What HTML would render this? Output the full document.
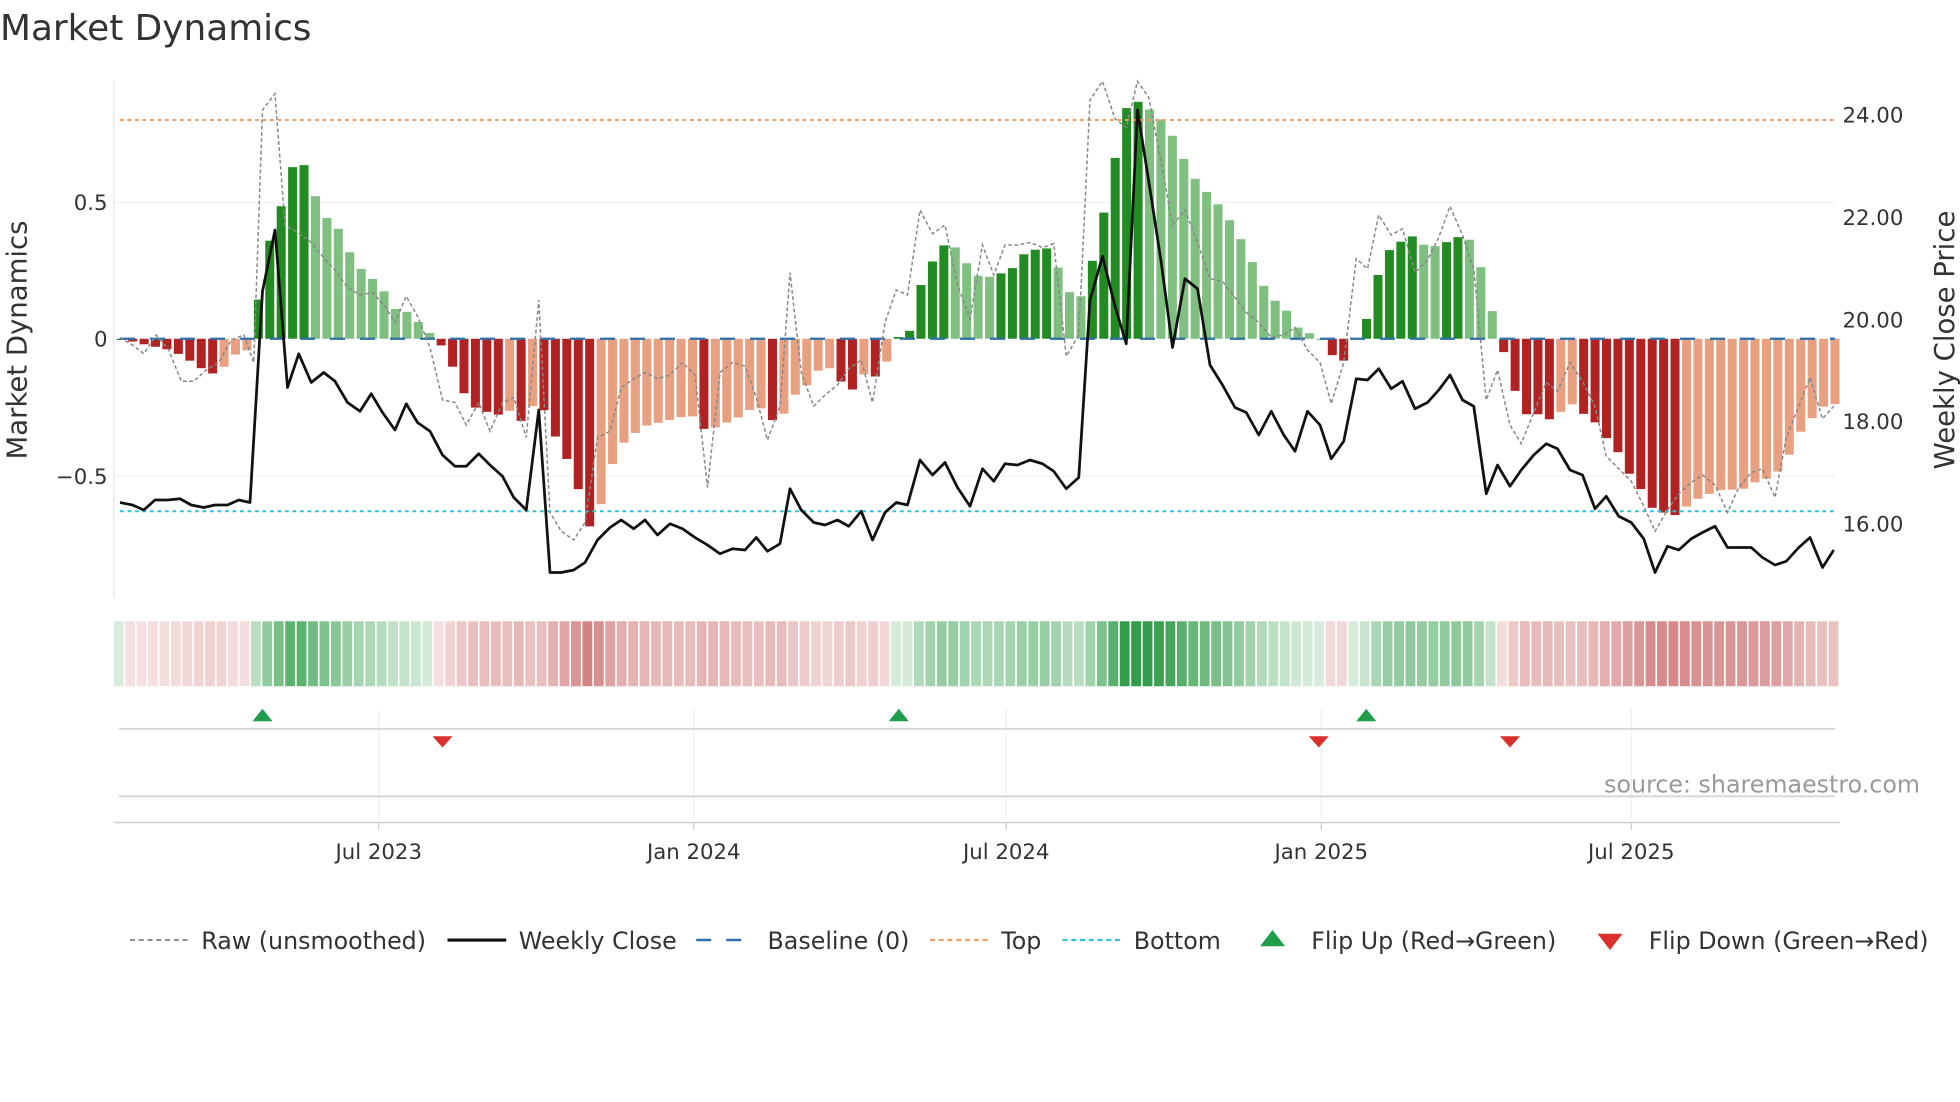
<!DOCTYPE html>
<html><head><meta charset="utf-8"><style>
html,body{margin:0;padding:0;background:#fff;width:1960px;height:1102px;overflow:hidden}
svg{display:block;font-family:"DejaVu Sans","Liberation Sans",sans-serif}
</style></head><body>
<svg id="s" width="1960" height="1102" viewBox="0 0 1568 881.6" preserveAspectRatio="none" xmlns="http://www.w3.org/2000/svg">
<rect width="1568" height="882" fill="#fff"/>
<text x="0" y="32" font-size="28.7" fill="#333">Market Dynamics</text>
<line x1="91" y1="65" x2="91" y2="478" stroke="#e6e6e6"/>
<line x1="91" y1="162" x2="1468" y2="162" stroke="#eef0f4"/>
<line x1="91" y1="381" x2="1468" y2="381" stroke="#eef0f4"/>
<g font-size="17" fill="#333">
<text x="86" y="168" text-anchor="end">0.5</text>
<text x="86" y="277" text-anchor="end">0</text>
<text x="86" y="387" text-anchor="end">−0.5</text>
<text x="1474" y="98">24.00</text>
<text x="1474" y="180">22.00</text>
<text x="1474" y="262">20.00</text>
<text x="1474" y="343">18.00</text>
<text x="1474" y="425">16.00</text>
</g>
<text transform="translate(21,272) rotate(-90)" text-anchor="middle" font-size="22" fill="#333">Market Dynamics</text>
<text transform="translate(1563,272) rotate(-90)" text-anchor="middle" font-size="22" fill="#333">Weekly Close Price</text>
<g id="bars"></g>
<line x1="96" y1="96" x2="1468" y2="96" stroke="#f0a060" stroke-width="1.6" stroke-dasharray="3,3"/>
<line x1="96" y1="409" x2="1468" y2="409" stroke="#2ec4d6" stroke-width="1.6" stroke-dasharray="3,3"/>
<line x1="96" y1="271" x2="1468" y2="271" stroke="#2f6fa8" stroke-width="1.8" stroke-dasharray="12,12"/>
<polyline id="raw" fill="none" stroke="#888" stroke-width="1.2" stroke-dasharray="3,2"/>
<polyline id="close" fill="none" stroke="#111" stroke-width="2.2" stroke-linejoin="round"/>
<g id="strip"></g>
<g stroke="#eceff3">
<line x1="303" y1="567" x2="303" y2="655"/><line x1="555" y1="567" x2="555" y2="655"/><line x1="805" y1="567" x2="805" y2="655"/><line x1="1057" y1="567" x2="1057" y2="655"/><line x1="1305" y1="567" x2="1305" y2="655"/>
</g>
<line x1="95" y1="583" x2="1468" y2="583" stroke="#d6d6d6" stroke-width="1.5"/>
<line x1="95" y1="637" x2="1468" y2="637" stroke="#d6d6d6" stroke-width="1.5"/>
<line x1="91" y1="658" x2="1472" y2="658" stroke="#d0d0d0" stroke-width="1.2"/>
<g fill="#1e9e4a"><path d="M202,577 L210,567 L218,577Z"/><path d="M711,577 L719,567 L727,577Z"/><path d="M1085,577 L1093,567 L1101,577Z"/></g>
<g fill="#d9302c"><path d="M346,589 L362,589 L354,598Z"/><path d="M1047,589 L1063,589 L1055,598Z"/><path d="M1200,589 L1216,589 L1208,598Z"/></g>
<text x="1536" y="634" text-anchor="end" font-size="19" fill="#999">source: sharemaestro.com</text>
<g stroke="#ccc"><line x1="303" y1="658" x2="303" y2="664"/><line x1="555" y1="658" x2="555" y2="664"/><line x1="805" y1="658" x2="805" y2="664"/><line x1="1057" y1="658" x2="1057" y2="664"/><line x1="1305" y1="658" x2="1305" y2="664"/></g>
<g font-size="17" fill="#333" text-anchor="middle">
<text x="303" y="687">Jul 2023</text><text x="555" y="687">Jan 2024</text><text x="805" y="687">Jul 2024</text><text x="1057" y="687">Jan 2025</text><text x="1305" y="687">Jul 2025</text>
</g>
<g font-size="19" fill="#333">
<line x1="104" y1="752" x2="150" y2="752" stroke="#888" stroke-width="1.5" stroke-dasharray="4,3"/>
<text x="161" y="759">Raw (unsmoothed)</text>
<line x1="358" y1="752" x2="405" y2="752" stroke="#111" stroke-width="2.5"/>
<text x="415" y="759">Weekly Close</text>
<line x1="557" y1="752" x2="604" y2="752" stroke="#2f6fa8" stroke-width="2" stroke-dasharray="12,12"/>
<text x="614" y="759">Baseline (0)</text>
<line x1="744" y1="752" x2="790" y2="752" stroke="#f0a060" stroke-width="1.8" stroke-dasharray="4,3"/>
<text x="801" y="759">Top</text>
<line x1="850" y1="752" x2="896" y2="752" stroke="#2ec4d6" stroke-width="1.8" stroke-dasharray="4,3"/>
<text x="907" y="759">Bottom</text>
<path d="M1008,757 L1018,744 L1028,757Z" fill="#1e9e4a"/>
<text x="1049" y="759">Flip Up (Red→Green)</text>
<path d="M1278,747 L1298,747 L1288,760Z" fill="#d9302c"/>
<text x="1319" y="759">Flip Down (Green→Red)</text>
</g>
</svg>
<script>
var kp=[[97,0],[115,-0.02],[135,-0.04],[145,-0.06],[155,-0.09],[165,-0.12],[172,-0.13],[180,-0.1],[190,-0.05],[200,-0.04],[208,0.18],[218,0.41],[228,0.52],[238,0.70],[248,0.58],[258,0.45],[268,0.43],[278,0.33],[288,0.26],[298,0.22],[308,0.17],[316,0.11],[325,0.1],[335,0.06],[344,0.02],[354,-0.03],[364,-0.12],[373,-0.22],[382,-0.26],[391,-0.27],[400,-0.28],[410,-0.26],[420,-0.32],[430,-0.2],[440,-0.32],[450,-0.41],[460,-0.5],[470,-0.7],[479,-0.64],[488,-0.48],[497,-0.39],[507,-0.35],[516,-0.32],[525,-0.31],[534,-0.3],[543,-0.29],[553,-0.28],[565,-0.34],[575,-0.32],[585,-0.3],[595,-0.28],[605,-0.24],[615,-0.28],[623,-0.33],[632,-0.21],[641,-0.2],[650,-0.14],[660,-0.09],[670,-0.14],[680,-0.2],[690,-0.13],[700,-0.14],[710,-0.08],[718,0.005],[728,0.03],[738,0.22],[748,0.3],[758,0.36],[768,0.32],[778,0.24],[788,0.22],[798,0.24],[808,0.24],[815,0.31],[824,0.31],[834,0.35],[843,0.3],[852,0.2],[862,0.12],[872,0.25],[882,0.44],[892,0.66],[902,0.86],[911,0.87],[920,0.84],[930,0.8],[940,0.73],[950,0.63],[960,0.56],[970,0.52],[980,0.46],[990,0.39],[1000,0.3],[1010,0.2],[1020,0.14],[1030,0.1],[1040,0.03],[1048,0.02],[1056,0.005],[1064,-0.05],[1073,-0.1],[1082,-0.01],[1092,0.05],[1102,0.23],[1112,0.33],[1122,0.36],[1132,0.38],[1140,0.34],[1150,0.34],[1160,0.36],[1170,0.38],[1180,0.35],[1188,0.2],[1198,0.03],[1208,-0.13],[1218,-0.28],[1228,-0.27],[1238,-0.3],[1248,-0.27],[1258,-0.24],[1268,-0.28],[1277,-0.31],[1286,-0.37],[1295,-0.42],[1304,-0.5],[1314,-0.56],[1323,-0.63],[1333,-0.64],[1343,-0.65],[1352,-0.6],[1362,-0.58],[1372,-0.56],[1382,-0.55],[1392,-0.56],[1401,-0.53],[1410,-0.52],[1420,-0.5],[1429,-0.45],[1439,-0.35],[1448,-0.3],[1458,-0.25],[1468,-0.24]];
function val(x){for(var i=0;i<kp.length-1;i++){if(x<=kp[i+1][0]){var a=kp[i],b=kp[i+1];return a[1]+(b[1]-a[1])*(x-a[0])/(b[0]-a[0]);}}return kp[kp.length-1][1];}
var NS="http://www.w3.org/2000/svg",bars=document.getElementById('bars'),strip=document.getElementById('strip');
var N=151,step=(1468-97)/(N-1),prev=0;
for(var i=0;i<N;i++){var x=97+i*step,v=val(x),up=v>=prev,c;
 if(v>=0)c=up?'#228b22':'#7fbf7f';else c=up?'#e9a080':'#b22222';
 var h=Math.abs(v)*218,r=document.createElementNS(NS,'rect');
 r.setAttribute('x',x-3.6);r.setAttribute('width',7.2);r.setAttribute('y',v>=0?271-h:271);r.setAttribute('height',Math.max(h,1));r.setAttribute('fill',c);bars.appendChild(r);
 var s=document.createElementNS(NS,'rect'),a=0.18+0.75*Math.min(1,Math.abs(v)/0.85);
 s.setAttribute('x',91+i*(1381/N));s.setAttribute('width',1381/N-1.3);s.setAttribute('y',497);s.setAttribute('height',52);
 s.setAttribute('fill',v>=0?'rgba(34,150,60,'+a+')':'rgba(190,70,70,'+(a*0.85)+')');strip.appendChild(s);prev=v;}
document.getElementById('close').setAttribute('points',"96,402 106,404 115,408 124,400 134,400 144,399 153,404 163,406 172,404 182,404 191,400 200,402 210,233 220,184 230,310 239,283 249,306 259,298 268,305 278,322 288,329 297,315 306,330 316,344 325,323 334,338 344,345 354,364 364,373 373,373 383,363 392,372 402,381 411,398 421,408 431,328 440,458 449,458 459,456 468,450 478,432 488,422 497,416 507,423 516,416 526,428 536,419 546,423 556,430 566,436 576,443 586,439 596,440 605,430 614,441 624,435 632,391 641,408 651,418 660,420 670,416 679,421 689,409 698,432 708,410 717,402 726,404 736,368 746,380 756,370 766,390 776,405 786,375 795,385 804,371 814,372 824,368 834,371 843,377 853,391 863,382 872,240 882,205 892,245 901,275 910,88 919,145 929,210 938,278 948,223 958,231 968,292 978,308 988,326 997,330 1007,348 1017,329 1027,348 1036,361 1046,329 1056,340 1065,367 1075,353 1085,303 1094,304 1103,295 1113,311 1122,305 1132,327 1142,322 1151,312 1160,300 1170,320 1179,325 1189,395 1198,372 1208,389 1217,376 1227,364 1237,355 1246,359 1256,376 1266,380 1276,407 1285,397 1295,413 1305,418 1315,431 1324,458 1334,437 1343,440 1353,431 1362,426 1372,421 1382,438 1391,438 1401,438 1410,446 1420,452 1429,449 1439,438 1448,430 1458,454 1467,440");
document.getElementById('raw').setAttribute('points',"96,270 106,276 115,283 125,268 135,280 145,305 155,305 165,296 175,290 185,272 195,268 203,290 210,88 220,75 228,180 238,186 248,193 258,205 268,216 278,230 288,236 298,234 308,245 316,258 325,237 334,253 344,278 354,320 364,322 373,340 383,322 392,345 402,322 411,318 421,350 431,240 440,410 449,425 459,432 468,418 478,350 488,345 497,310 507,303 516,298 526,303 536,300 546,290 556,300 566,390 576,298 586,290 596,293 605,318 614,352 624,325 632,218 641,298 651,325 660,316 670,308 679,295 689,288 698,322 708,258 717,232 726,236 736,168 746,187 756,180 766,228 776,255 786,196 795,220 804,196 814,196 824,194 834,198 843,195 853,285 863,268 872,80 882,65 892,95 901,102 910,65 919,78 929,130 938,180 948,168 958,194 968,223 978,225 988,238 997,250 1007,258 1017,270 1027,268 1036,262 1046,280 1056,290 1065,323 1075,290 1085,207 1094,215 1103,172 1113,188 1122,183 1132,218 1142,208 1151,190 1160,165 1170,188 1179,215 1189,320 1198,296 1208,340 1217,355 1227,330 1237,306 1246,313 1256,290 1266,305 1276,325 1285,365 1295,375 1305,385 1315,405 1324,425 1334,408 1343,395 1353,386 1362,380 1372,388 1382,410 1391,390 1401,378 1410,375 1420,398 1429,350 1439,325 1448,302 1458,335 1467,325");
</script>
</body></html>
